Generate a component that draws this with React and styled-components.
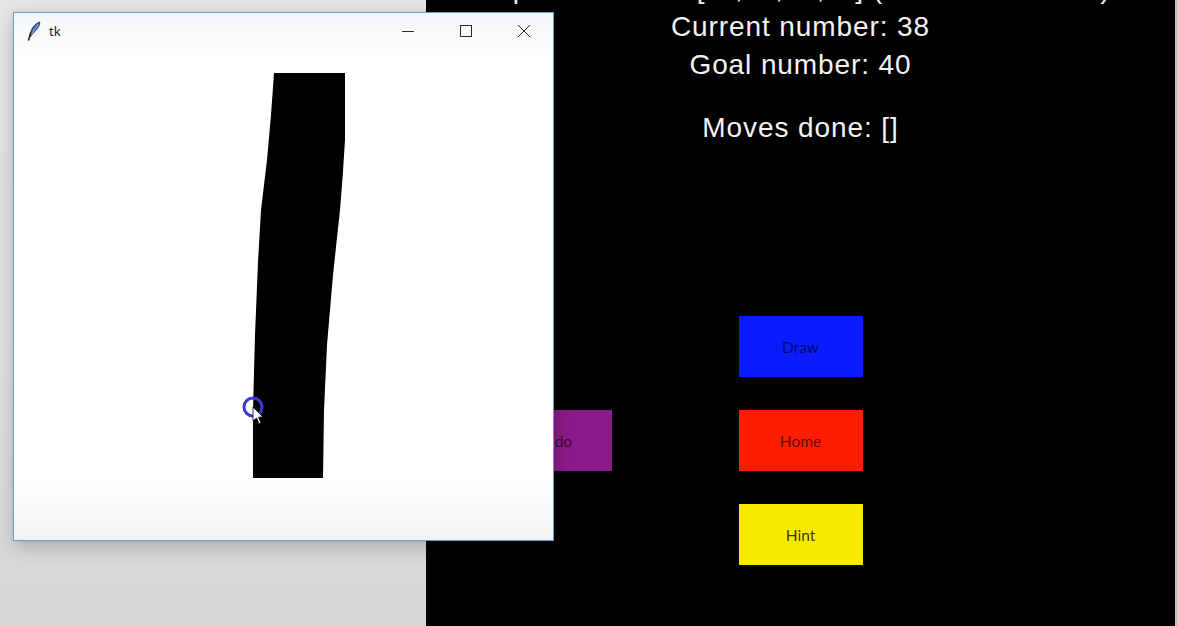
import React from "react";
import styled, { createGlobalStyle } from "styled-components";

const Global = createGlobalStyle`
  html, body { margin: 0; padding: 0; background: #000; overflow: hidden; }
  #root { width: 1177px; height: 626px; }
`;

const Screen = styled.div`
  position: relative;
  width: 1177px;
  height: 626px;
  display: flex;
  overflow: hidden;
`;

const Desktop = styled.div`
  width: 426px;
  flex: none;
  background: linear-gradient(180deg, #e6e6e6 0%, #e2e2e2 60%, #d7d7d7 100%);
`;

const Panel = styled.main`
  width: 749px;
  flex: none;
  background: #000;
  display: flex;
  flex-direction: column;
  align-items: center;
  font-family: "Liberation Sans", Arial, sans-serif;
  color: #f2f2f2;
`;

const Edge = styled.div`
  flex: 1;
  background: #bdbdbd;
`;

const Line = styled.div`
  font-size: 28px;
  letter-spacing: 0.9px;
  line-height: 38px;
  white-space: nowrap;
  margin-top: ${(p) => p.$mt || 0}px;
`;

const ButtonStack = styled.div`
  margin-top: 169px;
  display: flex;
  flex-direction: column;
  align-items: center;
  gap: 33px;
`;

const Row = styled.div`
  position: relative;
  display: flex;
  justify-content: center;
`;

const Btn = styled.div`
  width: 124px;
  height: 61px;
  background: ${(p) => p.$bg};
  color: ${(p) => p.$fg || "rgba(0,0,0,0.7)"};
  display: flex;
  align-items: center;
  justify-content: center;
  font-family: Lato, "Open Sans", sans-serif;
  font-size: 15.5px;
  padding-top: 1px;
  box-sizing: border-box;
`;

const SideBtn = styled(Btn)`
  position: absolute;
  right: calc(100% + 127px);
  top: 0;
  padding-left: 8px;
`;

const Window = styled.div`
  position: absolute;
  left: 13px;
  top: 12px;
  width: 541px;
  height: 529px;
  box-sizing: border-box;
  border: 1px solid #66a2d6;
  background: #fff;
  box-shadow: 0 6px 18px rgba(0, 0, 0, 0.22), 0 0 3px rgba(0, 0, 0, 0.08);
  display: flex;
  flex-direction: column;
`;

const TitleBar = styled.div`
  height: 36px;
  flex: none;
  display: flex;
  align-items: center;
  background: linear-gradient(180deg, #f4f7f9 0%, #fbfcfd 100%);
  padding-left: 13px;
`;

const TitleText = styled.span`
  font-family: "Noto Sans", "Open Sans", sans-serif;
  font-size: 13px;
  color: #1a1a1a;
  margin-left: 8px;
  margin-top: -1px;
`;

const Controls = styled.div`
  margin-left: auto;
  display: flex;
  height: 100%;
`;

const Ctrl = styled.div`
  width: 58px;
  height: 100%;
  display: flex;
  align-items: center;
  justify-content: center;
`;

const Canvas = styled.div`
  flex: 1;
  background: linear-gradient(180deg, #ffffff 0%, #ffffff 88%, #f3f3f3 100%);
  position: relative;
`;

const Feather = () => (
  <svg width="14" height="20" viewBox="0 0 14 20">
    <path d="M12.6 1 C 8 2.8, 4.6 7, 3.4 12.2 L 2.6 16.4 C 5.2 13, 9.4 9.4, 11.6 5.6 C 12.5 4, 12.9 2.4, 12.6 1 Z" fill="#3f66b8" stroke="#1d2d5c" strokeWidth="0.9" />
    <path d="M3.6 12.2 L 1.6 19" stroke="#111" strokeWidth="1.4" strokeLinecap="round" />
    <path d="M11 3.4 L 4.4 13.4" stroke="#c7d6f3" strokeWidth="0.7" />
  </svg>
);

export default function App() {
  return (
    <>
      <Global />
      <Screen>
        <Desktop />
        <Panel>
          <Line $mt={-30}>Operations are ['+', '-', '*', '/'] (see in that order)</Line>
          <Line>Current number: 38</Line>
          <Line>Goal number: 40</Line>
          <Line $mt={25}>Moves done: []</Line>
          <ButtonStack>
            <Btn $bg="#0a1cff" $fg="rgba(0,0,40,0.72)">Draw</Btn>
            <Row>
              <SideBtn $bg="#8c1a8a" $fg="rgba(20,0,20,0.7)">Undo</SideBtn>
              <Btn $bg="#ff1d00" $fg="rgba(40,0,0,0.72)">Home</Btn>
            </Row>
            <Btn $bg="#f8e900" $fg="rgba(0,0,0,0.78)">Hint</Btn>
          </ButtonStack>
        </Panel>
        <Edge />
        <Window>
          <TitleBar>
            <Feather />
            <TitleText>tk</TitleText>
            <Controls>
              <Ctrl>
                <svg width="14" height="14" viewBox="0 0 14 14">
                  <path d="M1 7.5 H13" stroke="#2a2a2a" strokeWidth="1" />
                </svg>
              </Ctrl>
              <Ctrl>
                <svg width="14" height="14" viewBox="0 0 14 14">
                  <rect x="1.5" y="1.5" width="11" height="11" fill="none" stroke="#2a2a2a" strokeWidth="1" />
                </svg>
              </Ctrl>
              <Ctrl>
                <svg width="14" height="14" viewBox="0 0 14 14">
                  <path d="M1 1 L13 13 M13 1 L1 13" stroke="#2a2a2a" strokeWidth="1" />
                </svg>
              </Ctrl>
            </Controls>
          </TitleBar>
          <Canvas>
            <svg width="539" height="491" viewBox="14 49 539 491" style={{ display: "block" }}>
              <path
                d="M274 73 L345 73 L345 140 Q343 175 340 210 L333 275 L327 345 L324 410 L323 478 L253 478 L253 410 L255 335 L258 262 L261 210 L267 160 L271 115 Z"
                fill="#000"
              />
              <circle cx="253" cy="407" r="9" fill="none" stroke="#3a3ad2" strokeWidth="3" />
              <path d="M253 407 L253 421 L256.5 418 L259 424 L261 423 L258.6 417.2 L263 417 Z" fill="#fff" stroke="#000" strokeWidth="0.8" />
            </svg>
          </Canvas>
        </Window>
      </Screen>
    </>
  );
}
